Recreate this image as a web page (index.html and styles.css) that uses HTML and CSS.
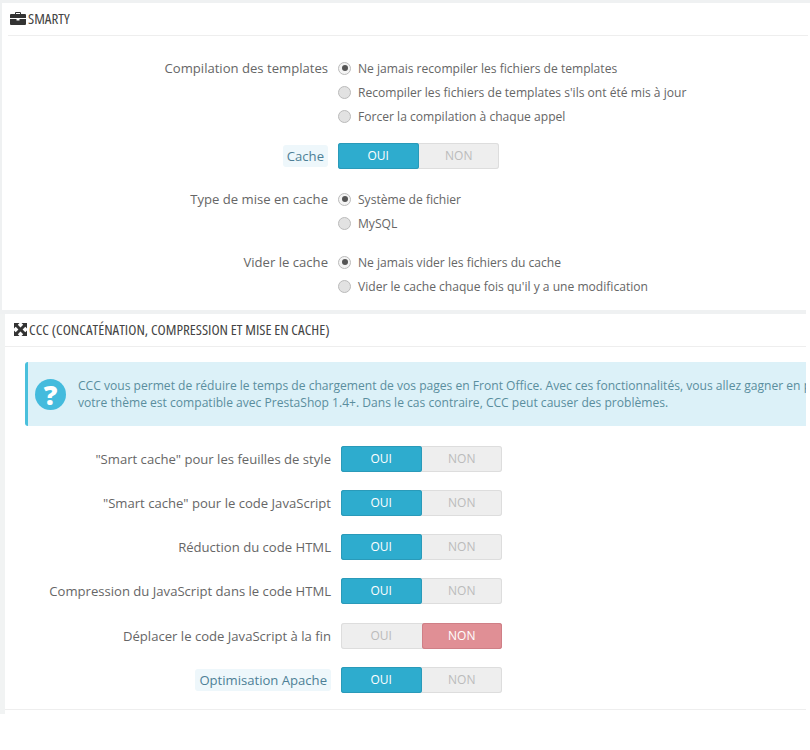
FILE: index.html
```html
<!DOCTYPE html>
<html lang="fr">
  <head>
    <meta charset="UTF-8" />
    <meta name="viewport" content="width=device-width, initial-scale=1.0" />
    <title>Performances</title>
    <link rel="stylesheet" href="styles.css">
  </head>
  <body>
    <!-- SMARTY -->
    <div class="panel smarty">
      <div class="heading">
        <svg class="ico" viewBox="0 0 16 13" width="16" height="13">
          <path d="M5 2V1q0-1 1-1h4q1 0 1 1v1h4q1 0 1 1v3H0V3q0-1 1-1zM6 1v1h4V1zM0 7h6.500v1.500h3V7H16v5q0 1-1 1H1q-1 0-1-1z" fill="#333" fill-rule="evenodd"/>
        </svg>
        <span class="title">SMARTY</span>
      </div>
      <div class="form">
        <div class="row radios first">
          <label>Compilation des templates</label>
          <div class="choices">
            <p><i class="radio on"></i>Ne jamais recompiler les fichiers de templates</p>
            <p><i class="radio"></i>Recompiler les fichiers de templates s'ils ont été mis à jour</p>
            <p><i class="radio"></i>Forcer la compilation à chaque appel</p>
          </div>
        </div>
        <div class="row switch-row">
          <label><span class="hint">Cache</span></label>
          <div class="switch"><span class="yes">OUI</span><span>NON</span></div>
        </div>
        <div class="row radios">
          <label>Type de mise en cache</label>
          <div class="choices">
            <p><i class="radio on"></i>Système de fichier</p>
            <p><i class="radio"></i>MySQL</p>
          </div>
        </div>
        <div class="row radios">
          <label>Vider le cache</label>
          <div class="choices">
            <p><i class="radio on"></i>Ne jamais vider les fichiers du cache</p>
            <p><i class="radio"></i>Vider le cache chaque fois qu'il y a une modification</p>
          </div>
        </div>
      </div>
    </div>

    <div class="gap"></div>

    <!-- CCC -->
    <div class="panel ccc">
      <div class="heading">
        <svg class="ico" viewBox="0 0 13 13" width="13" height="13">
          <path d="M0 0h5.500L3.800 1.700 6.500 4.400 9.200 1.700 7.500 0H13v5.500l-1.700-1.700-2.700 2.700 2.700 2.700L13 7.500V13H7.500l1.700-1.700-2.700-2.700-2.700 2.700L5.500 13H0V7.500l1.700 1.700 2.700-2.700-2.700-2.700L0 5.500z" fill="#333"/>
        </svg>
        <span class="title">CCC (CONCATÉNATION, COMPRESSION ET MISE EN CACHE)</span>
      </div>
      <div class="alert">
        <div class="alert-ico">?</div>
        <div class="alert-text">
          <p>CCC vous permet de réduire le temps de chargement de vos pages en Front Office. Avec ces fonctionnalités, vous allez gagner en performance.</p>
          <p>votre thème est compatible avec PrestaShop 1.4+. Dans le cas contraire, CCC peut causer des problèmes.</p>
        </div>
      </div>
      <div class="form switches">
        <div class="row">
          <label>"Smart cache" pour les feuilles de style</label>
          <div class="switch"><span class="yes">OUI</span><span>NON</span></div>
        </div>
        <div class="row">
          <label>"Smart cache" pour le code JavaScript</label>
          <div class="switch"><span class="yes">OUI</span><span>NON</span></div>
        </div>
        <div class="row">
          <label>Réduction du code HTML</label>
          <div class="switch"><span class="yes">OUI</span><span>NON</span></div>
        </div>
        <div class="row">
          <label>Compression du JavaScript dans le code HTML</label>
          <div class="switch"><span class="yes">OUI</span><span>NON</span></div>
        </div>
        <div class="row">
          <label>Déplacer le code JavaScript à la fin</label>
          <div class="switch"><span>OUI</span><span class="no">NON</span></div>
        </div>
        <div class="row">
          <label><span class="hint">Optimisation Apache</span></label>
          <div class="switch"><span class="yes">OUI</span><span>NON</span></div>
        </div>
      </div>
      <div class="foot"></div>
    </div>
  </body>
</html>
```

FILE: styles.css
```css
* {
  margin: 0;
  padding: 0;
  box-sizing: border-box;
}

body {
  background: #fff;
  font-family: "Open Sans", "Liberation Sans", sans-serif;
  font-size: 13px;
  color: #666;
}

.panel {
  background: #fff;
  overflow: hidden;
}

.smarty {
  height: 310px;
  border-top: 3px solid #eff1f2;
  border-left: 2px solid #eff1f2;
}

.gap {
  height: 4px;
  margin-right: 4px;
  background: #eff1f2;
}

.ccc {
  height: 400px;
  margin-right: 4px;
  border-left: 5px solid #f1f3f3;
}

.heading {
  display: flex;
  align-items: center;
  gap: 2px;
  height: 33px;
  margin: 0 2px 0 6px;
  padding: 0 0 2px 2px;
  border-bottom: 1px solid #eee;
  color: #444;
}

.ccc .heading {
  margin-left: 0;
  padding-left: 9px;
  margin-right: 0;
}

.title {
  font-size: 15px;
  font-stretch: 75%;
  white-space: nowrap;
}

.form {
  padding-top: 20px;
}

.row {
  display: grid;
  grid-template-columns: 326px 1fr;
  column-gap: 10px;
  align-items: center;
}

.row label {
  text-align: right;
  white-space: nowrap;
  font-size: 13.1px;
}

.radios {
  align-items: start;
  margin-top: 15px;
}

.radios.first {
  margin-top: 0;
}

.switch-row {
  margin: 15px 0 18px;
}

.choices p {
  display: flex;
  align-items: center;
  gap: 7px;
  height: 24px;
  font-size: 12.080px;
  white-space: nowrap;
}

.radios label {
  line-height: 24px;
}

.radio {
  width: 13px;
  height: 13px;
  border: 1px solid #bbb;
  border-radius: 50%;
  background: #e2e2e2;
}

.radio.on {
  position: relative;
  background: #f4f4f4;
}

.radio.on::after {
  content: "";
  position: absolute;
  top: 2.500px;
  left: 2.500px;
  width: 6px;
  height: 6px;
  border-radius: 50%;
  background: #555;
}

.hint {
  padding: 2px 4px;
  border-radius: 3px;
  background: #eef7fb;
  color: #4d7f96;
}

.switch {
  display: flex;
  width: 161px;
  height: 26px;
  border-radius: 3px;
  background: #eee;
  box-shadow: inset 0 0 0 1px #ddd;
}

.switch span {
  flex: 1;
  font-size: 12px;
  line-height: 26px;
  text-align: center;
  color: #bbb;
}

.switch .yes,
.switch .no {
  border-radius: 3px;
  color: #fff;
  font-weight: 500;
}

.switch .yes {
  background: #2eacce;
  box-shadow: inset 0 0 0 1px #2a9ab9;
}

.switch .no {
  background: #e08f95;
  box-shadow: inset 0 0 0 1px #cf7f86;
}

.alert {
  display: flex;
  align-items: center;
  height: 64px;
  margin: 15px 0 0 20px;
  border-left: 3px solid #4ac0dc;
  border-radius: 3px 0 0 3px;
  background: #dcf1f8;
  color: #5a8e9e;
  font-size: 12.080px;
}

.alert-ico {
  flex: none;
  width: 31px;
  height: 31px;
  margin-left: 7px;
  border-radius: 50%;
  background: #44bbdd;
  color: #fff;
  font-size: 27px;
  font-weight: 800;
  line-height: 31px;
  text-align: center;
}

.alert-text {
  margin-left: 12px;
  white-space: nowrap;
  line-height: 17px;
}

.switches .row + .row {
  margin-top: 18px;
}

.switches .row:nth-child(5) {
  margin-top: 19px;
}

.foot {
  margin-top: 16px;
  border-top: 1px solid #eee;
}
```
